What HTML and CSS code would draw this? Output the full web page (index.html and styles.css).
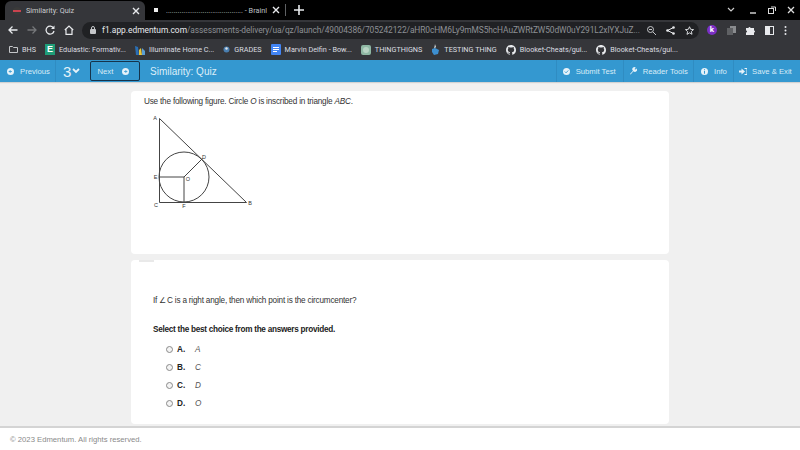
FILE: index.html
```html
<!DOCTYPE html>
<html lang="en">
<head>
<meta charset="utf-8">
<title>Similarity: Quiz</title>
<link rel="stylesheet" href="styles.css">
</head>
<body>
<div class="tabstrip">
  <div class="tab active">
    <svg class="fav" width="10" height="10" viewBox="0 0 10 10"><circle cx="5" cy="5" r="4" fill="#3a3a3a"/><rect x="1" y="4" width="8" height="2" fill="#c8434f"/></svg>
    <span class="tab-title">Similarity: Quiz</span>
    <svg class="x" width="8" height="8" viewBox="0 0 8 8"><path d="M1 1l6 6M7 1L1 7" stroke="#e8eaed" stroke-width="1.4"/></svg>
  </div>
  <div class="tab other">
    <svg class="fav" width="6" height="6" viewBox="0 0 6 6"><rect x="1" y="1" width="4" height="4" fill="#eee"/></svg>
    <span class="tab-title dim">........................................ - Brainl</span>
    <svg class="x" width="8" height="8" viewBox="0 0 8 8"><path d="M1 1l6 6M7 1L1 7" stroke="#e8eaed" stroke-width="1.4"/></svg>
    <span class="tab-sep"></span>
    <svg class="plus" width="10" height="10" viewBox="0 0 10 10"><path d="M5 0v10M0 5h10" stroke="#e8eaed" stroke-width="1.6"/></svg>
  </div>
  <div class="win-controls">
    <svg width="8" height="6" viewBox="0 0 8 6"><path d="M1 1l3 3 3-3" fill="none" stroke="#ccc" stroke-width="1.2"/></svg>
    <svg width="8" height="8" viewBox="0 0 8 8"><path d="M1 7h6" stroke="#ddd" stroke-width="1.4"/></svg>
    <svg width="8" height="8" viewBox="0 0 8 8"><rect x="0.5" y="2.5" width="5" height="5" fill="none" stroke="#ddd"/><path d="M3 1h4.500v4" fill="none" stroke="#ddd"/></svg>
    <svg width="8" height="8" viewBox="0 0 8 8"><path d="M1 1l6 6M7 1L1 7" stroke="#ddd" stroke-width="1.3"/></svg>
  </div>
</div>

<div class="toolbar">
  <div class="nav-icons">
    <svg width="10" height="10" viewBox="0 0 10 10"><path d="M9.500 5H1M4.500 1.500L1 5l3.500 3.500" fill="none" stroke="#e8eaed" stroke-width="1.3"/></svg>
    <svg width="10" height="10" viewBox="0 0 10 10"><path d="M.5 5H9M5.500 1.500L9 5 5.500 8.500" fill="none" stroke="#75777a" stroke-width="1.3"/></svg>
    <svg width="10" height="10" viewBox="0 0 10 10"><path d="M8.500 3A4 4 0 1 0 9 6" fill="none" stroke="#e8eaed" stroke-width="1.3"/><path d="M9.500 .5v3.500H6z" fill="#e8eaed"/></svg>
    <svg width="10" height="10" viewBox="0 0 10 10"><path d="M.8 5L5 1l4.200 4M2 4.500V9.300h6V4.500" fill="none" stroke="#e8eaed" stroke-width="1.2"/></svg>
  </div>
  <div class="omnibox">
    <svg width="6" height="8" viewBox="0 0 6 8"><rect y="3" width="6" height="5" rx="1" fill="#c4c6c9"/><path d="M1.500 3.500V2a1.500 1.500 0 0 1 3 0v1.500" fill="none" stroke="#c4c6c9"/></svg>
    <span class="url"><span class="host">f1.app.edmentum.com</span><span class="path">/assessments-delivery/ua/qz/launch/49004386/705242122/aHR0cHM6Ly9mMS5hcHAuZWRtZW50dW0uY291L2xlYXJuZ...</span></span>
    <span class="omni-icons">
      <svg width="9" height="9" viewBox="0 0 9 9"><circle cx="3.500" cy="3.500" r="3" fill="none" stroke="#c4c6c9"/><path d="M6 6l3 3M2 3.500h3" stroke="#c4c6c9"/></svg>
      <svg width="9" height="9" viewBox="0 0 9 9"><path d="M7.500 1.500L1.500 4.500l6 3" fill="none" stroke="#e8eaed"/><circle cx="7.500" cy="1.500" r="1.300" fill="#e8eaed"/><circle cx="1.500" cy="4.500" r="1.300" fill="#e8eaed"/><circle cx="7.500" cy="7.500" r="1.300" fill="#e8eaed"/></svg>
      <svg width="9" height="9" viewBox="0 0 10 10"><path d="M5 .8l1.300 2.900 3.200.3-2.400 2.100.7 3.100L5 7.600 2.200 9.300l.7-3.100L.5 4l3.200-.3z" fill="none" stroke="#e8eaed"/></svg>
    </span>
  </div>
  <div class="ext-icons">
    <span class="ext-k">k</span>
    <svg width="9" height="9" viewBox="0 0 9 9"><rect x="3" y="0" width="6" height="7" fill="#8a8c8f"/><rect y="2" width="6" height="7" fill="#5f6164"/></svg>
    <svg width="9" height="9" viewBox="0 0 9 9"><path d="M0 2h2.500a1 1 0 0 1 2 0H8v2.500a1 1 0 0 1 0 2V9H0V6.500a1 1 0 0 0 0-2z" fill="#e8eaed"/></svg>
    <svg width="9" height="9" viewBox="0 0 9 9"><rect x=".5" y=".5" width="8" height="8" fill="none" stroke="#e8eaed"/><rect x="1" y="1" width="4" height="7" fill="#e8eaed"/></svg>
    <svg width="3" height="9" viewBox="0 0 3 9"><circle cx="1.500" cy="1" r="1" fill="#e8eaed"/><circle cx="1.500" cy="4.500" r="1" fill="#e8eaed"/><circle cx="1.500" cy="8" r="1" fill="#e8eaed"/></svg>
  </div>
</div>

<div class="bookmarks">
  <span class="bm"><svg width="9" height="7" viewBox="0 0 9 7"><path d="M.5.5h3l1 1h4v5h-8z" fill="none" stroke="#c4c6c9"/></svg>BHS</span>
  <span class="bm"><span class="ico-e">E</span>Edulastic: Formativ...</span>
  <span class="bm"><svg width="10" height="10" viewBox="0 0 10 10"><path d="M0 1l3 1 1 8H1z" fill="#2a6fb5"/><path d="M4 5l2-2 1 7H4z" fill="#e8c53a"/><path d="M7 3l3 3v4H7z" fill="#5a9fd4"/></svg>Illuminate Home C...</span>
  <span class="bm"><svg width="7" height="7" viewBox="0 0 7 7"><circle cx="3.500" cy="3.500" r="3" fill="#4a7fb0"/><circle cx="3.500" cy="2.500" r="1.200" fill="#dfe3e6"/></svg>GRADES</span>
  <span class="bm"><svg width="10" height="11" viewBox="0 0 10 11"><rect width="10" height="11" rx="1" fill="#4285f4"/><path d="M2 3.500h6M2 5.500h6M2 7.500h4" stroke="#fff"/></svg>Marvin Delfin - Bow...</span>
  <span class="bm"><svg width="10" height="10" viewBox="0 0 10 10"><rect width="10" height="10" rx="2" fill="#8fb8a4"/><circle cx="5" cy="5" r="3" fill="#b8d4c4"/></svg>THINGTHIGNS</span>
  <span class="bm"><svg width="9" height="11" viewBox="0 0 9 11"><path d="M4 0l1 3-2 2z" fill="#d8dde0"/><path d="M1 5l3-1 4 2-1 4-4 1-2-3z" fill="#3d8fd0"/></svg>TESTING THING</span>
  <span class="bm"><svg width="10" height="10" viewBox="0 0 16 16"><path fill="#e8eaed" d="M8 0C3.580 0 0 3.580 0 8c0 3.540 2.290 6.530 5.470 7.590.4.070.55-.17.55-.38 0-.19-.01-.82-.01-1.490-2.010.37-2.530-.49-2.690-.94-.09-.23-.48-.94-.82-1.130-.28-.15-.68-.52-.01-.53.630-.01 1.080.58 1.230.82.720 1.210 1.870.87 2.330.66.070-.52.28-.87.51-1.070-1.780-.2-3.640-.89-3.640-3.950 0-.87.31-1.590.82-2.150-.08-.2-.36-1.020.08-2.120 0 0 .67-.21 2.200.82.640-.18 1.320-.27 2-.27s1.360.09 2 .27c1.530-1.040 2.200-.82 2.200-.82.440 1.100.16 1.920.08 2.120.51.560.82 1.270.82 2.150 0 3.070-1.870 3.750-3.650 3.950.29.250.54.730.54 1.480 0 1.070-.01 1.930-.01 2.200 0 .21.150.46.550.38A8.010 8.010 0 0 0 16 8c0-4.420-3.580-8-8-8z"/></svg>Blooket-Cheats/gui...</span>
  <span class="bm"><svg width="10" height="10" viewBox="0 0 16 16"><path fill="#e8eaed" d="M8 0C3.580 0 0 3.580 0 8c0 3.540 2.290 6.530 5.470 7.590.4.070.55-.17.55-.38 0-.19-.01-.82-.01-1.490-2.010.37-2.530-.49-2.690-.94-.09-.23-.48-.94-.82-1.130-.28-.15-.68-.52-.01-.53.630-.01 1.080.58 1.230.82.720 1.210 1.870.87 2.330.66.070-.52.28-.87.51-1.070-1.780-.2-3.640-.89-3.640-3.950 0-.87.31-1.590.82-2.150-.08-.2-.36-1.020.08-2.120 0 0 .67-.21 2.200.82.640-.18 1.320-.27 2-.27s1.360.09 2 .27c1.530-1.040 2.200-.82 2.200-.82.440 1.100.16 1.920.08 2.120.51.560.82 1.270.82 2.150 0 3.070-1.870 3.750-3.650 3.950.29.250.54.730.54 1.480 0 1.070-.01 1.930-.01 2.200 0 .21.150.46.550.38A8.010 8.010 0 0 0 16 8c0-4.420-3.580-8-8-8z"/></svg>Blooket-Cheats/gui...</span>
</div>

<header class="appbar">
  <div class="bar-btn prev">
    <svg width="7" height="7" viewBox="0 0 8 8"><circle cx="4" cy="4" r="4" fill="#e6f2f9"/><path d="M5.500 4h-3M4 2.500L2.500 4 4 5.500" fill="none" stroke="#3498d0"/></svg>
    <span>Previous</span>
  </div>
  <div class="bar-btn qnum"><span class="num">3</span><svg width="8" height="6" viewBox="0 0 8 6"><path d="M1 1l3 3 3-3" fill="none" stroke="#e6f2f9" stroke-width="1.800"/></svg></div>
  <div class="next-btn"><span>Next</span><svg width="7" height="7" viewBox="0 0 8 8"><circle cx="4" cy="4" r="4" fill="#e6f2f9"/><path d="M2.500 4h3M4 2.500L5.500 4 4 5.500" fill="none" stroke="#3498d0"/></svg></div>
  <div class="quiz-title">Similarity: Quiz</div>
  <div class="bar-right">
    <div class="bar-btn tool submit"><svg width="7" height="7" viewBox="0 0 8 8"><circle cx="4" cy="4" r="4" fill="#e6f2f9"/><path d="M2 4l1.500 1.500L6 2.800" fill="none" stroke="#3498d0"/></svg><span>Submit Test</span></div>
    <div class="bar-btn tool reader"><svg width="8" height="8" viewBox="0 0 8 8"><path d="M1 7l3-3.200A2 2 0 0 1 6.800.7L5.500 2l.7.7 1.200-1.200A2 2 0 0 1 4.500 4.300L1.600 7.600z" fill="#e6f2f9"/></svg><span>Reader Tools</span></div>
    <div class="bar-btn tool info"><svg width="7" height="7" viewBox="0 0 8 8"><circle cx="4" cy="4" r="4" fill="#e6f2f9"/><path d="M4 3.500v3M4 1.500v1" stroke="#3498d0" stroke-width="1.200"/></svg><span>Info</span></div>
    <div class="bar-btn tool save"><svg width="8" height="7" viewBox="0 0 8 7"><path d="M0 2.500h2.500V.5L6 3.500l-3.500 3v-2H0z" fill="#e6f2f9"/><path d="M5.500.5H8v6H5.500" fill="none" stroke="#e6f2f9"/></svg><span>Save &amp; Exit</span></div>
  </div>
</header>

<main class="content">
  <section class="card card-top">
    <p class="stem">Use the following figure. Circle <i>O</i> is inscribed in triangle <i>ABC</i>.</p>
    <svg class="figure" width="118" height="104" viewBox="0 0 118 104">
      <g fill="none" stroke="#444" stroke-width="1">
        <path d="M19.500 10.500V94.500H106.500Z"/>
        <circle cx="44" cy="69" r="25"/>
        <path d="M19.500 69H44V94.500M44 69L62.500 50.500"/>
      </g>
      <g class="fig-label">
        <text x="15" y="12">A</text>
        <text x="110" y="97">B</text>
        <text x="16" y="99">C</text>
        <text x="64" y="50.500">D</text>
        <text x="15.500" y="71">E</text>
        <text x="44" y="100">F</text>
        <text x="48" y="72.500">O</text>
      </g>
    </svg>
  </section>
  <section class="card card-bottom">
    <span class="card-tab"></span>
    <p class="question">If ∠<span class="c">C</span> is a right angle, then which point is the circumcenter?</p>
    <p class="prompt">Select the best choice from the answers provided.</p>
    <ul class="choices">
      <li><span class="radio"></span><b>A.</b><i>A</i></li>
      <li><span class="radio"></span><b>B.</b><i>C</i></li>
      <li><span class="radio"></span><b>C.</b><i>D</i></li>
      <li><span class="radio"></span><b>D.</b><i>O</i></li>
    </ul>
  </section>
</main>

<footer class="footer">© 2023 Edmentum. All rights reserved.</footer>
</body>
</html>
```

FILE: styles.css
```css
* { box-sizing: border-box; }
html, body { margin: 0; padding: 0; }
body {
  width: 800px;
  height: 450px;
  overflow: hidden;
  display: flex;
  flex-direction: column;
  background: #fff;
  font-family: "Liberation Sans", Arial, sans-serif;
}
svg { display: block; flex: none; }

/* browser tabs */
.tabstrip {
  height: 20px;
  flex: none;
  background: #000;
  display: flex;
  align-items: stretch;
  padding-left: 5px;
  color: #e8eaed;
  font: 7.300px Roboto, sans-serif;
}
.tab { display: flex; align-items: center; }
.tab.active {
  width: 140px;
  margin-top: 1px;
  background: #35363a;
  border-radius: 6px 6px 0 0;
  padding: 0 5px 0 7px;
}
.tab.active .tab-title { flex: 1; margin-left: 4px; color: #c9cbce; }
.tab.other { padding-left: 8px; }
.tab.other .tab-title { margin-left: 7px; width: 104px; overflow: hidden; white-space: nowrap; color: #bfc1c4; }
.tab.other .x { margin-left: 2px; }
.tab-sep { width: 1px; height: 12px; background: #5f6164; margin: 0 8px 0 5px; }
.win-controls {
  margin-left: auto;
  display: flex;
  align-items: center;
  gap: 11px;
  padding-right: 5px;
}
.win-controls svg:first-child { margin-right: 3px; }

/* address bar */
.toolbar {
  height: 20px;
  flex: none;
  background: #35363a;
  display: flex;
  align-items: center;
  padding-left: 8px;
}
.nav-icons { display: flex; align-items: center; gap: 8.700px; width: 74px; }
.omnibox {
  width: 617px;
  height: 17px;
  border-radius: 9px;
  background: #202124;
  display: flex;
  align-items: center;
  padding: 0 5px 0 8px;
  gap: 6px;
  font: 8.400px Roboto, sans-serif;
  color: #8d9094;
}
.url { width: 538px; white-space: nowrap; }
.host { color: #e8eaed; }
.path { letter-spacing: -.09px; }
.omni-icons { display: flex; align-items: center; gap: 10px; margin-left: auto; }
.ext-icons { display: flex; align-items: center; gap: 10px; margin-left: 8px; }
.ext-k {
  width: 10px;
  height: 10px;
  border-radius: 50%;
  background: #7b2fc4;
  color: #fff;
  font: bold 8px/10px Roboto, sans-serif;
  text-align: center;
}

/* bookmarks */
.bookmarks {
  height: 20px;
  flex: none;
  background: #35363a;
  display: flex;
  align-items: center;
  padding: 0 0 1px 9px;
  color: #dcdee1;
  font: 7.250px Roboto, sans-serif;
  white-space: nowrap;
}
.bm { display: flex; align-items: center; gap: 4px; margin-right: 9px; }
.ico-e {
  width: 10px;
  height: 11px;
  background: #1f9d78;
  color: #fff;
  font: bold 9px/11px "Liberation Sans", sans-serif;
  text-align: center;
}

/* application bar */
.appbar {
  height: 22px;
  flex: none;
  background: #3498d0;
  display: flex;
  align-items: stretch;
  color: #d9ecf7;
  font: 7.700px "Liberation Sans", sans-serif;
  white-space: nowrap;
  box-shadow: 0 1px 1px rgba(0, 0, 0, .12);
  position: relative;
}
.bar-btn { display: flex; align-items: center; }
.prev { width: 56px; padding-left: 7px; gap: 6px; border-right: 1px solid #2f8cc2; }
.qnum { width: 34px; padding-left: 7px; gap: 1px; }
.num { font: 15px "Liberation Sans", sans-serif; color: #e6f2f9; }
.next-btn {
  width: 50px;
  margin: 1px 0;
  border: 1px solid #15334b;
  border-radius: 2px;
  display: flex;
  align-items: center;
  padding: 0 10px 0 6.500px;
  justify-content: space-between;
}
.quiz-title { margin-left: 10px; font-size: 10px; line-height: 24px; color: #dceef8; }
.bar-right { margin-left: auto; display: flex; }
.tool { border-left: 1px solid #2f8cc2; }
.submit { width: 67px; padding-left: 6px; gap: 5.700px; }
.reader { width: 70px; padding-left: 5px; gap: 5.700px; }
.info { width: 40px; padding-left: 7px; gap: 6px; }
.save { width: 67px; padding-left: 5px; gap: 5px; }

/* content */
.content {
  flex: 1;
  min-height: 0;
  background: #f0f0f0;
  padding: 9px 0 2px 131px;
  display: flex;
  flex-direction: column;
  gap: 6px;
  border-bottom: 2px solid #d4d4d4;
}
.card {
  width: 538px;
  background: #fff;
  border-radius: 4px;
  color: #333;
}
.card-top { height: 164px; padding: 6px 13px; }
.stem { margin: 0; font-size: 8.200px; letter-spacing: -.2px; line-height: 10px; }
.figure { margin-top: .5px; margin-left: -4px; }
.fig-label text { font-size: 5.500px; fill: #333; text-anchor: middle; font-family: "Liberation Sans", sans-serif; }
.card-bottom {
  height: 164px;
  padding: 35px 22px 0;
  position: relative;
}
.card-tab {
  position: absolute;
  left: 8px;
  top: 0;
  width: 15px;
  height: 2px;
  background: #e9e9e9;
}
.question { margin: 0; font-size: 8.200px; letter-spacing: -.2px; line-height: 11px; }
.c { margin-left: 1px; }
.prompt { margin: 18px 0 0; font-size: 8.200px; letter-spacing: -.27px; line-height: 11px; font-weight: bold; color: #222; }
.choices { list-style: none; margin: 5px 0 0 13px; padding: 0; }
.choices li {
  height: 18px;
  display: flex;
  align-items: center;
  font-size: 8.200px;
}
.radio {
  width: 7px;
  height: 7px;
  border: 1px solid #8a8a8a;
  border-radius: 50%;
  background: #f4f4f4;
  margin-right: 4px;
}
.choices b { width: 18px; color: #222; }
.choices i { color: #555; }

/* footer */
.footer {
  height: 22px;
  flex: none;
  padding: 6px 0 0 10px;
  font-size: 7.700px;
  line-height: 11px;
  color: #8a8a8a;
}
```
